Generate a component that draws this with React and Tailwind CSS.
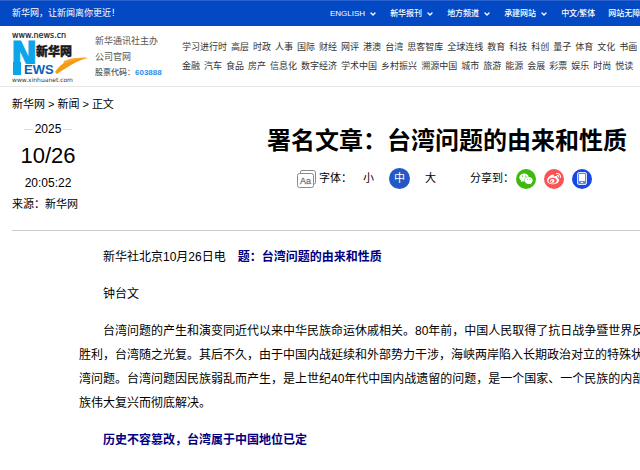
import React from 'react'
import { ChevronDown } from 'lucide-react'
import { FaWeixin, FaWeibo } from 'react-icons/fa'

const topLinks = [
  { label: 'ENGLISH', menu: true },
  { label: '新华报刊', menu: true },
  { label: '地方频道', menu: true },
  { label: '承建网站', menu: true },
  { label: '中文/繁体' },
  { label: '网站无障碍' }
]

const channels = [
  ['学习进行时', '高层', '时政', '人事', '国际', '财经', '网评', '港澳', '台湾', '思客智库', '全球连线', '教育', '科技', '科创', '量子', '体育', '文化', '书画'],
  ['金融', '汽车', '食品', '房产', '信息化', '数字经济', '学术中国', '乡村振兴', '溯源中国', '城市', '旅游', '能源', '会展', '彩票', '娱乐', '时尚', '悦读']
]

const fontSizes = ['小', '中', '大']

const Logo = () => (
  <svg width="76" height="52" viewBox="0 0 76 52" overflow="visible" role="img" aria-label="新华网">
    <text x="0" y="6" fontSize="8" fill="#222" stroke="#222" strokeWidth=".2" fontFamily="DejaVu Sans, sans-serif">www.news.cn</text>
    <rect x="1" y="30" width="8" height="13" fill="#0aa5ea" />
    <text x="-1" y="35" fontSize="35" fontWeight="700" fill="#0aa5ea" stroke="#0aa5ea" strokeWidth="1" fontFamily="Liberation Sans Narrow, DejaVu Sans Condensed, sans-serif">N</text>
    <text x="24" y="24" fontSize="12" fontWeight="900" fill="#1a1a1a" stroke="#1a1a1a" strokeWidth=".4" fontFamily="Noto Sans CJK SC, sans-serif">新华网</text>
    <text x="12" y="42" fontSize="13" fontWeight="700" fill="#0b5fb4" stroke="#fff" strokeWidth="2" paintOrder="stroke" fontFamily="Liberation Sans, sans-serif">EWS</text>
    <path d="M43 40 C50 30 60 25 76 26 C66 28 57 34 45 42 Z" fill="#f59a16" />
    <path d="M52 29 C58 26 66 25 75 26 C67 27 60 28 51 32 Z" fill="#f8ab2c" />
    <text x="0" y="50" fontSize="6" fill="#333" fontFamily="DejaVu Sans, sans-serif">www.xinhuanet.com</text>
  </svg>
)

const FontIcon = () => (
  <svg width="19" height="18" viewBox="0 0 19 18" fill="none" stroke="#8a8a8a" strokeWidth="1">
    <path d="M3.500 3 V2 Q3.500 .5 5 .5 H16.500 Q18.500 .5 18.500 2.500 V12.500 Q18.500 14 17 14" />
    <rect x=".5" y="3.500" width="16" height="14" rx="2" />
    <text x="3" y="14" fontSize="9" fill="#777" stroke="#777" strokeWidth=".3" fontFamily="Liberation Sans, sans-serif">Aa</text>
  </svg>
)

const TopBar = () => (
  <div className="flex h-[26px] items-center border-t border-[#2a62cf] bg-[#0349c3] pl-3 text-white">
    <p className="w-[318px] shrink-0 text-[9px]">新华网，让新闻离你更近！</p>
    <nav className="flex shrink-0 gap-[13px] text-[8px] font-medium">
      {topLinks.map(({ label, menu }) => (
        <a key={label} href="#" className="flex items-center gap-1">
          {label}
          {menu && <ChevronDown size={8} strokeWidth={4} />}
        </a>
      ))}
    </nav>
  </div>
)

const SiteHeader = () => (
  <header className="flex h-[61px] items-start border-b border-[#e6e6e6] pl-3 pt-[6px]">
    <a href="#" className="shrink-0"><Logo /></a>
    <div className="ml-[7px] w-[87px] shrink-0 pt-px text-[9px] leading-4 text-[#555]">
      <p>新华通讯社主办</p>
      <p>公司官网</p>
      <p className="text-[8px] font-medium">
        股票代码：<a href="#" className="font-bold text-[#2c8cf0]">603888</a>
      </p>
    </div>
    <nav className="shrink-0 pt-[6px] text-[9px] leading-[19px] text-[#333]">
      {channels.map((row) => (
        <div key={row[0]} className="flex gap-1">
          {row.map((name) => (
            <a key={name} href="#">{name}</a>
          ))}
        </div>
      ))}
    </nav>
  </header>
)

const PublishInfo = () => (
  <div className="w-[72px] shrink-0 text-center">
    <div className="flex items-center justify-center gap-[2px] text-[12px] leading-4">
      <span className="h-px w-[9px] bg-[#ddd]" />
      2025
      <span className="h-px w-[9px] bg-[#ddd]" />
    </div>
    <p className="py-1 text-[22px] leading-[29px]">10/26</p>
    <p className="text-[12px] leading-[18px]">20:05:22</p>
    <p className="pt-1 text-left text-[11px] leading-4">来源：新华网</p>
  </div>
)

const Tools = () => (
  <div className="flex items-center pl-[30px] text-[11px]">
    <FontIcon />
    <span className="ml-[3px] w-[36px]">字体：</span>
    <div className="ml-[3px] flex gap-[10px]">
      {fontSizes.map((size) => (
        <button
          key={size}
          type="button"
          className={size === '中' ? 'size-[21px] rounded-full bg-[#2259c7] text-white' : 'size-[21px]'}
        >
          {size}
        </button>
      ))}
    </div>
    <span className="ml-[29px] w-[46px]">分享到：</span>
    <div className="flex gap-2">
      <button type="button" aria-label="微信" className="flex size-5 items-center justify-center rounded-full bg-[#3fb90c] text-white">
        <FaWeixin size={14} />
      </button>
      <button type="button" aria-label="微博" className="flex size-5 items-center justify-center rounded-full bg-[#fa5353] text-white">
        <FaWeibo size={14} />
      </button>
      <button type="button" aria-label="手机" className="flex size-5 items-center justify-center rounded-full bg-[#1748e6]">
        <svg width="10" height="13" viewBox="0 0 10 13">
          <rect x=".5" y=".5" width="9" height="12" rx="1.500" fill="#5f88f5" stroke="#dbe5ff" />
          <rect x="2" y="2" width="6" height="7" fill="#fff" />
          <rect x="4" y="10" width="2" height="1" fill="#fff" />
        </svg>
      </button>
    </div>
  </div>
)

const Article = () => (
  <article className="flex flex-col gap-[13px] pl-[79px] pt-[14px] text-[12px] leading-6">
    <p className="indent-6">
      新华社北京10月26日电　<strong className="text-[#000080]">题：台湾问题的由来和性质</strong>
    </p>
    <p className="indent-6">钟台文</p>
    <p className="indent-6">
      台湾问题的产生和演变同近代以来中华民族命运休戚相关。80年前，中国人民取得了抗日战争暨世界反
      <br />
      胜利，台湾随之光复。其后不久，由于中国内战延续和外部势力干涉，海峡两岸陷入长期政治对立的特殊状
      <br />
      湾问题。台湾问题因民族弱乱而产生，是上世纪40年代中国内战遗留的问题，是一个国家、一个民族的内部
      <br />
      族伟大复兴而彻底解决。
    </p>
    <p className="indent-6 font-bold text-[#000080]">历史不容篡改，台湾属于中国地位已定</p>
  </article>
)

const App = () => (
  <div lang="zh-CN" className="min-h-screen overflow-hidden whitespace-nowrap bg-white font-['Liberation_Sans','Noto_Sans_CJK_SC',sans-serif] text-black">
    <TopBar />
    <SiteHeader />
    <nav className="flex gap-[3px] pl-3 pt-2 text-[11px] leading-[18px]">
      <a href="#">新华网</a>&gt;<a href="#">新闻</a>&gt;<span>正文</span>
    </nav>
    <section className="ml-3 flex h-[118px] border-b border-[#ccc] pt-2">
      <PublishInfo />
      <div className="ml-[183px] shrink-0 pt-px">
        <h1 className="pb-2 text-[24px] font-bold leading-[38px]">署名文章：台湾问题的由来和性质</h1>
        <Tools />
      </div>
    </section>
    <Article />
  </div>
)

export default App
